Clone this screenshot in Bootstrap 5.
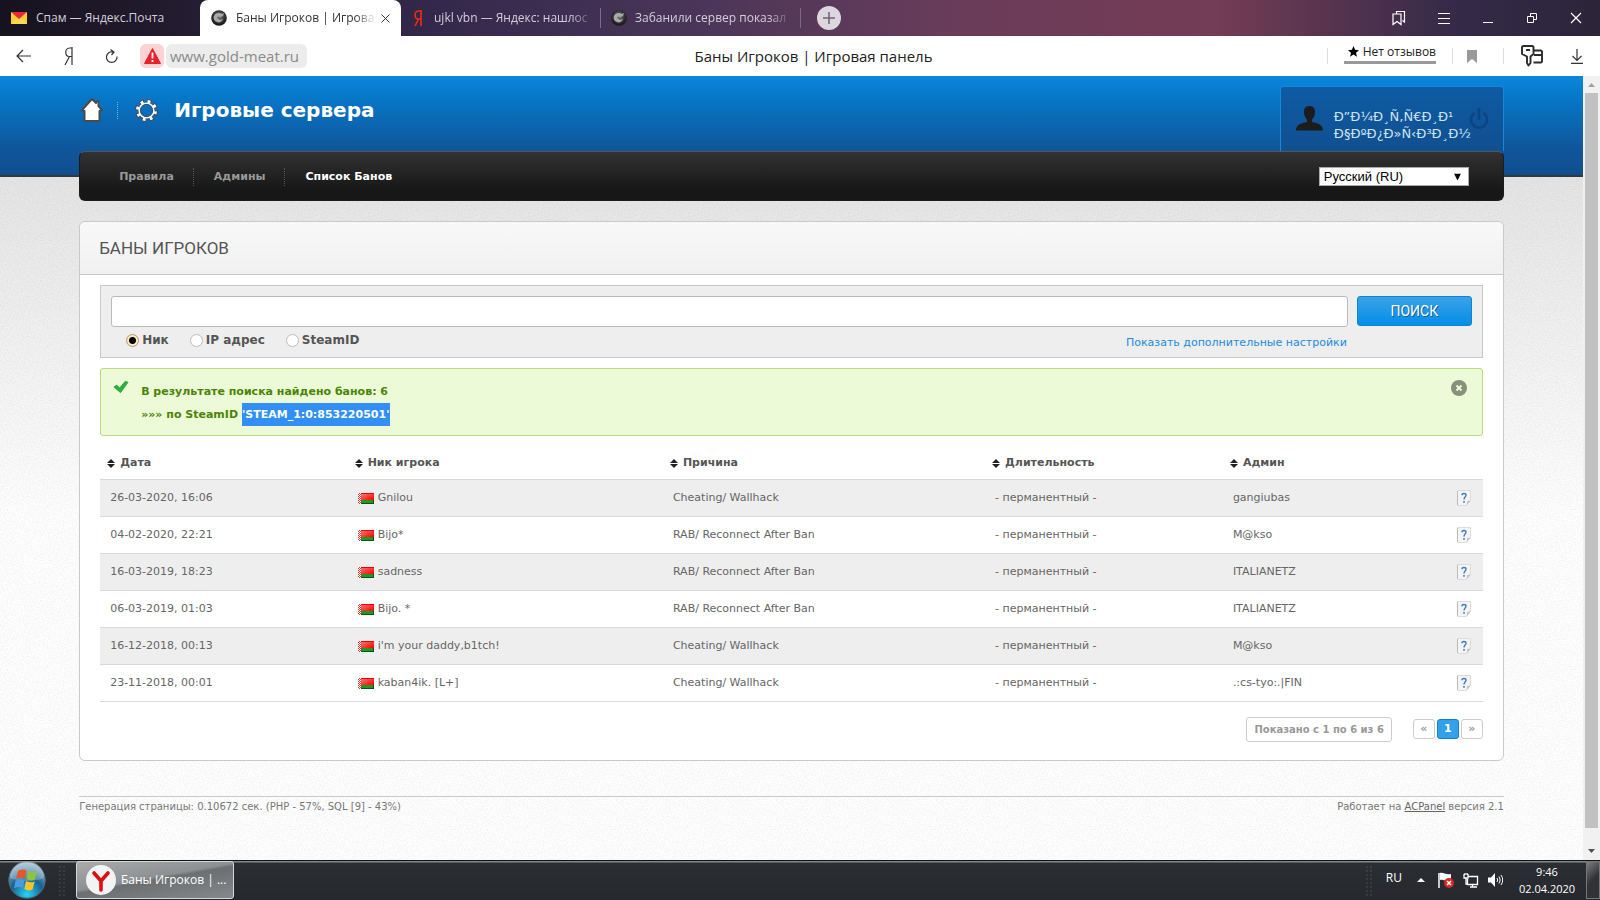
<!DOCTYPE html>
<html lang="ru">
<head>
<meta charset="utf-8">
<meta name="viewport" content="width=device-width, initial-scale=1">
<title>Баны Игроков | Игровая панель</title>
<link href="https://cdn.jsdelivr.net/npm/bootstrap@5.3.0/dist/css/bootstrap.min.css" rel="stylesheet">
<style>
:root{--ui:"Open Sans","Noto Sans",sans-serif;--site:"DejaVu Sans",Verdana,sans-serif}
body{font-family:var(--ui);font-size:13px;line-height:18px;background:#fff}
svg{display:block;flex:none}
button{font-family:inherit}
.plain{background:none;border:0;padding:0;color:inherit}

/* browser tabs */
.tabstrip{height:36px;background:linear-gradient(90deg,#16121f 0,#241c30 12%,#33284b 27%,#4b3659 44%,#6a3c5a 60%,#743c55 76%,#4a304c 86%,#342a49 91%,#2b2539 100%);color:#d3ced8}
.btab{height:36px;color:inherit;text-decoration:none;white-space:nowrap}
.btab .cap{flex:1;min-width:0;overflow:hidden;font-size:12px;-webkit-mask-image:linear-gradient(90deg,#000 85%,transparent)}
.btab .cap.full{-webkit-mask-image:none}
.btab.current{background:#fff;color:#333;border-radius:8px 8px 0 0}
.t-a{width:200px;padding-left:11px;gap:9px}
.t-b{width:201px;padding:0 11px 0 11px;gap:5px}
.t-c{width:199px;padding:0 6px 0 13px;gap:12px}
.t-d{width:199px;padding:0 8px 0 10px;gap:8px}
.tsep{width:1px;height:20px;background:#7a6b87}
.plus{width:24px;height:24px;border-radius:50%;background:#dcd6df;margin-left:16px}
.winbtns{gap:32px;padding-right:18px}

/* address bar */
.addressbar{height:40px;background:#fff;color:#222}
.leftset{flex:1 1 0;padding-left:16px}
.leftset .yandex,.leftset .reload{margin-left:32px}
.rightset{flex:1 1 0;padding-right:17px}
.warnbox{width:24px;height:24px;border-radius:6px;background:#fbd3d5;margin-left:21px}
.host{height:24px;line-height:24px;border:0;border-radius:6px;background:#ececec;color:#8a8a8a;font-size:15px;width:141px;padding:0 4px;margin-left:2px}
.pagename{font-size:15px;color:#222;padding-left:28px}
.reviews{font-size:12px;line-height:16px;border-bottom:3px solid #999;color:#222;text-decoration:none;margin:0 16px 5px;padding-bottom:1px}
.asep{width:1px;height:16px;background:#ddd}
.bookmark{margin:0 26px 0 14px}
.keys{margin:0 28px 0 17px}

/* web page */
.viewport{flex:1 1 auto;min-height:0}
.site{flex:1;min-width:0;font-family:var(--site);font-size:11px;line-height:16px;color:#666;
 background:url("data:image/svg+xml,%3Csvg xmlns='http://www.w3.org/2000/svg' width='160' height='160'%3E%3Cfilter id='n'%3E%3CfeTurbulence type='fractalNoise' baseFrequency='.7' numOctaves='2' stitchTiles='stitch'/%3E%3CfeColorMatrix values='0 0 0 0 0 0 0 0 0 0 0 0 0 0 0 .3 0 0 0 -.11'/%3E%3C/filter%3E%3Crect width='160' height='160' filter='url(%23n)' opacity='.35'/%3E%3C/svg%3E"),linear-gradient(#e5e5e5 100px,#fff 440px)}
.wrap{width:90%;margin:0 auto}
.bluehead{height:101px;background:linear-gradient(#0a87db,#0775c5 25%,#10559a 75%,#104f8e);border-bottom:2px solid #33383d}
.toprow{margin:21px 0 0 2px;height:26px}
.toprow .dots{height:17px;margin:0 17px 0 14px}
.brand{color:#fff;font-weight:700;font-size:20px;line-height:26px;margin-left:16px}
.dots{width:0;border-left:1px dotted #7fb6e4}
.userbox{width:224px;height:65px;margin-top:10px;border:1px solid #1688dd;border-bottom:0;border-radius:4px 4px 0 0;background:linear-gradient(#0e5ba4,#10508f);color:#cfe3f5;font-size:13px;line-height:17px}
.userbox .who{margin:19px 11px 0 15px}
.userbox .uname{padding-top:21px}
.userbox .off{margin:20px 0 0 188px}
.mainmenu{height:50px;margin-top:-26px;position:relative;border-radius:6px;background:linear-gradient(#323232,#171717 80%);border:1px solid #1c1c1c;border-top-color:#555;padding:1px 34px 0 19px}
.mainmenu a{color:#999;font-weight:700;text-decoration:none;padding:0 19px 0 20px}
.mainmenu a.on{color:#fff}
.mainmenu .dots{height:18px;border-color:#555}
.lang{width:150px;height:19px;border:1px solid #aaa;background:#fff;color:#000;font:13px/17px "Liberation Sans",sans-serif;padding:0 4px;appearance:none;display:block}
.lang-arrow{pointer-events:none}
.panelbox{margin-top:20px;border:1px solid #c9c9c9;border-radius:6px;background:#fff}
.panelhead{height:53px;border-bottom:1px solid #c9c9c9;border-radius:6px 6px 0 0;background:linear-gradient(#f8f8f8,#f1f1f1);padding:0 19px}
.panelhead h1{font:400 17px/24px Roboto,sans-serif;color:#555;margin:0}
.panelbody{padding:10px 20px 18px}
.searchbox{background:#eee;border:1px solid #c9c9c9;padding:10px;height:73px}
.q{height:31px;border:1px solid #bbb;border-radius:3px;background:#fff;padding:0 8px;min-width:0}
.go{width:115px;height:30px;margin-left:9px;border:1px solid #0a84d8;border-radius:3px;background:linear-gradient(#3ba2e6,#038ee9);color:#fff;font:400 14px/18px Roboto,sans-serif;text-shadow:1px 1px 0 #1a5c90}
.under{padding:5px 125px 0 0}
.kinds{gap:21px;font-size:12px;font-weight:700;color:#555;padding-left:15px}
.kinds label{gap:3px}
.kinds input{appearance:none;width:13px;height:13px;border:1px solid #bbb;border-radius:50%;background:#fff;margin:0}
.kinds input:checked{border-color:#b39a6b;background:radial-gradient(circle,#000 0 3px,#fbe9c4 4px)}
.more{color:#1a8be0;text-decoration:none;padding-top:3px}
.note{height:68px;margin-top:10px;border:1px solid #b9dc80;border-radius:3px;background:#ecfad8;color:#4b8505;font-weight:700;line-height:23px;padding:11px 15px 0 12px;gap:12px}
.note mark{background:#318ff5;color:#fff;padding:0;display:inline-block}
.bans{width:100%;table-layout:fixed;margin:7px 0 0;color:#666;font-size:11px;line-height:16px}
.bans th,.bans td{height:37px;padding:1px 10px 0;border-bottom:1px solid #d9d9d9;vertical-align:middle;white-space:nowrap}
.bans th{height:36px;padding:5px 7px 0;color:#555}
.bans th span{gap:5px}
.bans tbody tr:nth-child(odd){background:#eee}
.w-date{width:17.9%}.w-nick{width:22.8%}.w-why{width:23.3%}.w-len{width:17.2%}.w-info{width:36px}
.pager{gap:2px;font-weight:700;color:#999;margin-top:15px}
.pager .box{border:1px solid #ccc;border-radius:3px;height:20px;line-height:18px;min-width:22px;text-align:center;background:#fff;color:#999;font-size:11px;text-decoration:none}
.pager .box.sum{height:25px;line-height:23px;font-size:10px;padding:0 7px;margin-right:19px}
.pager .box.cur{background:#36a0e6;border-color:#0a84d8;color:#fff}
.foot{margin-top:35px;border-top:1px solid #c9c9c9;font-size:10px;padding-top:2px;color:#777}
.foot a{color:#666}
.sbar{width:17px;background:#f1f1f1}
.sbar .thumb{width:13px;flex:1}
.sbar .thumb::before{content:"";display:block;height:98%;background:#c1c1c1}

/* taskbar */
.taskbar{height:40px;background:linear-gradient(#111 1px,#85888b 1px,#85888b 2px,#2b2e33 3px,#26282d);color:#fff;font-size:12px}
.start{margin-left:8px}
.grip{width:9px;height:31px;background:radial-gradient(circle,#666 0,transparent 1px) 0 0/4px 4px}
.start + .grip{margin:0 9px 0 12px}
.taskbtn{width:158px;height:38px;border:1px solid #d5d7d9;border-radius:3px;background:linear-gradient(170deg,#a9abac 0,#8d9092 45%,#6c6f71 50%,#86898b 100%);color:#fff;font-size:12px;padding:0 9px;gap:5px;white-space:nowrap}
.inputlang{padding-bottom:5px;margin:0 15px 0 12px}
.tray{gap:9px;margin-left:13px}
.clock{font-size:11px;line-height:17px;width:62px;margin:0 8px 0 13px}
.showdesk{width:14px;height:38px;border:1px solid #777;background:linear-gradient(135deg,#7d7f81,#303235 50%)}
</style>
</head>
<body class="vh-100 d-flex flex-column overflow-hidden">

<svg width="0" height="0" class="position-absolute" aria-hidden="true">
 <defs>
  <linearGradient id="redg" x1="0" y1="0" x2="1" y2="1"><stop offset="0" stop-color="#ff7a7a"/><stop offset="1" stop-color="#f00"/></linearGradient>
  <radialGradient id="orb" cx=".5" cy=".9" r=".9"><stop offset="0" stop-color="#25d5f8"/><stop offset=".5" stop-color="#17618f"/><stop offset="1" stop-color="#a8c3d4"/></radialGradient>
  <radialGradient id="ball" cx=".5" cy=".4" r=".6"><stop offset="0" stop-color="#888"/><stop offset=".6" stop-color="#333"/><stop offset="1" stop-color="#111"/></radialGradient>
  <symbol id="sort" viewBox="0 0 8 9"><path d="M4 0l4 4H0zM0 5h8L4 9z" fill="#222"/></symbol>
  <symbol id="by" viewBox="0 0 16 11"><path d="M0 0h16v11H0z" fill="#fff"/><path d="M3 0h13v7H3z" fill="url(#redg)"/><path d="M3 0h13v1H3z" fill="#e00"/><path d="M3 7h13v4H3z" fill="#1f9a1f"/><path d="M3 10h12V7h1v4H3z" fill="#052"/><path d="M1.500 0v11" stroke="#e33" stroke-dasharray="1 1"/><path d="M.5 1v10M2.500 1v10" stroke="#e33" stroke-dasharray="1 1"/></symbol>
  <symbol id="info" viewBox="0 0 14 16"><path d="M.5.5h13v10l-4 5h-9z" fill="#f4f4f4" stroke="#dcdcdc"/><path d="M.5 1v14" stroke="#bbb"/><path d="M9.500 15l1-4 3-.5z" fill="#bbb"/><path d="M5 5.200C5 3 9 3 9 5.200 9 7 7 7 7 9.500" fill="none" stroke="#3c7fc8" stroke-width="1.400"/><path d="M6.200 11h1.600v1.800H6.200z" fill="#3c7fc8"/></symbol>
  <symbol id="cs" viewBox="0 0 16 16"><circle cx="8" cy="8" r="7.800" fill="url(#ball)"/><path d="M3 6c1-3 5-4 8-2l2-1-1 3-3 1-2-1-1 2 3 2 3-1c-1 3-4 4-6 3-3-1-4-4-3-6z" fill="#aaa"/></symbol>
 </defs>
</svg>

<header>
 <nav class="tabstrip d-flex align-items-center" aria-label="Вкладки">
  <a href="#" class="btab t-a d-flex align-items-center"><svg width="16" height="12" viewBox="0 0 16 12"><path d="M0 0h16v12H0z" fill="#fc3"/><path d="M0 0h16L8 7z" fill="#e8283a"/><path d="M0 12l6-6 2 2 2-2 6 6z" fill="#ffd94d"/></svg><span class="cap full">Спам — Яндекс.Почта</span></a>
  <a href="#" class="btab current t-b d-flex align-items-center"><svg class="me-1" width="16" height="16"><use href="#cs"/></svg><span class="cap">Баны Игроков | Игрова</span><svg width="9" height="9" viewBox="0 0 9 9"><path d="M.5.5l8 8m0-8l-8 8" stroke="#333"/></svg></a>
  <a href="#" class="btab t-c d-flex align-items-center"><svg width="8" height="16" viewBox="0 0 8 16"><path d="M7 0v16M7 1H4.500C0 1 0 9 4.500 9H7M4.500 9L1 16" fill="none" stroke="#f22b12" stroke-width="1.600"/></svg><span class="cap">ujkl vbn — Яндекс: нашлос</span></a>
  <span class="tsep"></span>
  <a href="#" class="btab t-d d-flex align-items-center"><svg width="16" height="16"><use href="#cs"/></svg><span class="cap">Забанили сервер показал</span></a>
  <span class="tsep"></span>
  <button class="plus border-0 p-0 d-flex align-items-center justify-content-center" aria-label="Новая вкладка"><svg width="12" height="12" viewBox="0 0 12 12"><path d="M6 0v12M0 6h12" stroke="#6b6472" stroke-width="1.500"/></svg></button>
  <div class="winbtns d-flex align-items-center ms-auto">
   <button class="plain" aria-label="Коллекции"><svg width="14" height="16" viewBox="0 0 14 16"><path d="M1 4h8v10.500l-4-3-4 3zM4.500 4V1.500h8V12l-2-1.500" fill="none" stroke="#fff" stroke-width="1.200"/></svg></button>
   <button class="plain" aria-label="Меню"><svg width="12" height="11" viewBox="0 0 12 11"><path d="M0 .5h12M0 5.500h12M0 10.500h12" stroke="#fff"/></svg></button>
   <button class="plain pt-2" aria-label="Свернуть"><svg width="12" height="3" viewBox="0 0 12 3"><path d="M1 1.500h10" stroke="#fff"/></svg></button>
   <button class="plain" aria-label="Развернуть"><svg width="12" height="12" viewBox="0 0 12 12"><path d="M1.500 4.500h6v6h-6zM4.500 4V1.500h6v6H8" fill="none" stroke="#fff"/></svg></button>
   <button class="plain" aria-label="Закрыть"><svg width="12" height="12" viewBox="0 0 12 12"><path d="M1 1l10 10M11 1L1 11" stroke="#fff" stroke-width="1.200"/></svg></button>
  </div>
 </nav>
 <div class="addressbar d-flex align-items-center">
  <div class="leftset d-flex align-items-center">
   <button class="plain" aria-label="Назад"><svg width="16" height="14" viewBox="0 0 16 14"><path d="M15 7H1m6-6L1 7l6 6" fill="none" stroke="#333" stroke-width="1.200"/></svg></button>
   <button class="plain yandex" aria-label="Яндекс"><svg width="9" height="18" viewBox="0 0 9 18"><path d="M8 0v18M8 1H5.500C.5 1 .5 9.500 5.500 9.500H8M5.500 9.500L1 18" fill="none" stroke="#333" stroke-width="1.200"/></svg></button>
   <button class="plain reload" aria-label="Обновить"><svg width="14" height="15" viewBox="0 0 14 15"><path d="M12 7.500a5.300 5.300 0 1 1-4-4.600H6M5.500.5L9 3 6.500 6" fill="none" stroke="#333" stroke-width="1.200"/></svg></button>
   <span class="warnbox d-flex align-items-center justify-content-center"><svg width="17" height="16" viewBox="0 0 17 16"><path d="M8.500.5l8 15H.5z" fill="#e3242b" stroke="#e3242b" stroke-linejoin="round"/><path d="M8.500 4.500v6M8.500 12v2" stroke="#fff" stroke-width="1.800"/></svg></span>
   <input class="host" aria-label="Адрес" value="www.gold-meat.ru">
  </div>
  <div class="pagename">Баны Игроков | Игровая панель</div>
  <div class="rightset d-flex align-items-center justify-content-end">
   <span class="asep"></span>
   <a href="#" class="reviews d-flex align-items-center"><svg class="ms-1 me-1" width="11" height="11" viewBox="0 0 24 24"><path d="M12 0l3.500 8.300 8.500.7-6.500 5.700 2 8.800L12 18.800l-7.500 4.700 2-8.800L0 9l8.500-.7z"/></svg>Нет отзывов</a>
   <span class="asep"></span>
   <button class="plain bookmark" aria-label="Закладка"><svg width="10" height="13" viewBox="0 0 10 13"><path d="M0 0h10v13L5 9l-5 4z" fill="#999"/></svg></button>
   <span class="asep"></span>
   <button class="plain keys" aria-label="Пароли"><svg width="22" height="22" viewBox="0 0 22 22"><path d="M2 1h9.500l1 1v7l-3 2.500V18l-2 2.500L6 18v-6.500L1 9V2zM5 5h4M13 5.500h7l1 1v10l-1 1h-7.500M13 10h8" fill="none" stroke="#2b2b2b" stroke-width="1.900" stroke-linejoin="round"/></svg></button>
   <button class="plain" aria-label="Загрузки"><svg width="12" height="16" viewBox="0 0 12 16"><path d="M6 1v11M1.500 8L6 12.500 10.500 8M0 15.300h12" fill="none" stroke="#333" stroke-width="1.200"/></svg></button>
  </div>
 </div>
</header>

<div class="viewport d-flex">
 <main class="site">
  <div class="bluehead">
   <div class="wrap d-flex">
    <div class="toprow d-flex align-items-center">
     <a href="#" aria-label="Главная"><svg width="22" height="24" viewBox="0 0 22 24"><path d="M11 1l4 4V3.500h2.500V8L21 12l-2.500 1v10h-15V13L1 12z" fill="#fff" stroke="#4a4a4a" stroke-width="2" stroke-linejoin="round"/></svg></a>
     <span class="dots"></span>
     <svg width="23" height="23" viewBox="0 0 24 24"><circle cx="12" cy="12" r="9.500" fill="none" stroke="#4a4a4a" stroke-width="5" stroke-dasharray="4.700 2.760"/><circle cx="12" cy="12" r="9.500" fill="none" stroke="#fff" stroke-width="3" stroke-dasharray="2.900 4.560" stroke-dashoffset="-.9"/><circle cx="12" cy="12" r="7.600" fill="none" stroke="#fff" stroke-width="1.600"/><circle cx="12" cy="12" r="6.300" fill="none" stroke="#4a4a4a"/></svg>
     <div class="brand">Игровые сервера</div>
    </div>
    <div class="userbox ms-auto d-flex">
     <svg class="who" width="27" height="25" viewBox="0 0 27 25"><path d="M13.500 0C9 0 7.500 3.500 8 7c.3 3 1.500 5 3 6.500V16c-6 1-11 3-11 8.500h27c0-5.500-5-7.500-11-8.500v-2.500c1.500-1.500 2.700-3.500 3-6.500.5-3.500-1-7-5.500-7z" fill="#1c1c1c"/></svg>
     <div class="uname">Ð”Ð¼Ð¸Ñ‚Ñ€Ð¸Ð¹<br>Ð§ÐºÐ¿Ð»Ñ‹Ð³Ð¸Ð½</div>
     <a href="#" class="off position-absolute" aria-label="Выход"><svg width="20" height="23" viewBox="0 0 20 23"><path d="M5.500 6a8 8 0 1 0 9 0M10 1v12" fill="none" stroke="#0b4683" stroke-width="2.600"/></svg></a>
    </div>
   </div>
  </div>
  <div class="wrap">
   <nav class="mainmenu d-flex align-items-center">
    <a href="#">Правила</a><span class="dots"></span><a href="#">Админы</a><span class="dots"></span><a href="#" class="on">Список Банов</a>
    <div class="ms-auto position-relative"><select class="lang" aria-label="Язык"><option>Русский (RU)</option></select><svg class="lang-arrow position-absolute top-50 end-0 translate-middle-y me-2" width="7" height="7" viewBox="0 0 7 7"><path d="M0 0h7L3.500 7z"/></svg></div>
   </nav>

   <section class="panelbox">
    <div class="panelhead d-flex align-items-center"><h1>БАНЫ ИГРОКОВ</h1></div>
    <div class="panelbody">
     <form class="searchbox">
      <div class="d-flex"><input class="q flex-grow-1" aria-label="Поиск" type="text"><button type="button" class="go">ПОИСК</button></div>
      <div class="under d-flex align-items-start">
       <div class="kinds d-flex">
        <label class="d-flex align-items-center"><input type="radio" name="k" checked>Ник</label>
        <label class="d-flex align-items-center"><input type="radio" name="k">IP адрес</label>
        <label class="d-flex align-items-center"><input type="radio" name="k">SteamID</label>
       </div>
       <a href="#" class="more ms-auto">Показать дополнительные настройки</a>
      </div>
     </form>
     <div class="note d-flex">
      <svg width="16" height="14" viewBox="0 0 17 14"><path d="M1 7l3-2 3 3 6-7 3 1-8 11z" fill="#2cb53c" stroke="#1f9a30" stroke-width=".8"/></svg>
      <div>В результате поиска найдено банов: 6<br>»»» по SteamID <mark>'STEAM_1:0:853220501'</mark></div>
      <button class="plain ms-auto align-self-start" aria-label="Скрыть"><svg width="16" height="16" viewBox="0 0 16 16"><circle cx="8" cy="8" r="8" fill="#86907a"/><path d="M5.500 5.500l5 5m0-5l-5 5" stroke="#ecfad8" stroke-width="2"/></svg></button>
     </div>
     <table class="bans">
      <colgroup><col class="w-date"><col class="w-nick"><col class="w-why"><col class="w-len"><col><col class="w-info"></colgroup>
      <thead><tr id="hd"></tr></thead>
      <tbody id="rows"></tbody>
     </table>
     <div class="pager d-flex align-items-center justify-content-end">
      <span class="box sum">Показано с 1 по 6 из 6</span><a href="#" class="box">«</a><a href="#" class="box cur">1</a><a href="#" class="box">»</a>
     </div>
    </div>
   </section>

   <footer class="foot d-flex justify-content-between"><span>Генерация страницы: 0.10672 сек. (PHP - 57%, SQL [9] - 43%)</span><span>Работает на <a href="#">ACPanel</a> версия 2.1</span></footer>
  </div>
 </main>
 <div class="sbar d-flex flex-column align-items-center">
  <svg width="17" height="17" viewBox="0 0 17 17"><path d="M5 11h7L8.500 7z" fill="#a3a3a3"/></svg>
  <div class="thumb"></div>
  <svg width="17" height="17" viewBox="0 0 17 17"><path d="M5 6h7l-3.500 4z" fill="#505050"/></svg>
 </div>
</div>

<footer class="taskbar d-flex align-items-center">
 <button class="plain start" aria-label="Пуск"><svg width="38" height="38" viewBox="0 0 38 38"><circle cx="19" cy="19" r="18.200" fill="url(#orb)" stroke="#4d6c80"/><path d="M2 17a17 17 0 0 1 34 0c-10 4-24 4-34 0z" fill="#fff" opacity=".25"/><path d="M10 10c3-2 6-2 8.500-.5L17 17.500c-3-1.500-6-1.300-9 .3z" fill="#e8562a"/><path d="M20 10c3 1.500 6 1.500 9 0l-2 8.500c-3 1.500-6 1-8.500-.5z" fill="#8cc63f"/><path d="M7.500 19.500c3-1.600 6-1.500 9 0L15 27c-3-1.500-6-1.300-9 .3z" fill="#4b9be0"/><path d="M18 20c3 1.500 6 1.700 8.700.4L24.500 28.500c-3 1.500-5.500 1-8.200-.5z" fill="#fbc22b"/></svg></button>
 <span class="grip"></span>
 <button class="taskbtn d-flex align-items-center"><svg width="30" height="30" viewBox="0 0 30 30"><circle cx="15" cy="15" r="15" fill="#f3f3f3"/><path d="M8 8l7 8 7-8M15 16v9" fill="none" stroke="#d8100f" stroke-width="3.600" stroke-linecap="round"/></svg><span>Баны Игроков | ...</span></button>
 <span class="grip ms-auto"></span>
 <span class="inputlang">RU</span>
 <svg width="8" height="4" viewBox="0 0 8 4"><path d="M0 4h8L4 0z" fill="#fff"/></svg>
 <div class="tray d-flex align-items-center">
  <svg width="16" height="16" viewBox="0 0 16 16"><path d="M1 1v15" stroke="#fff" stroke-width="1.500"/><path d="M2 1c4-1 5 2 11 1v7c-5 1-7-2-11-1z" fill="#fff"/><circle cx="11" cy="11" r="5" fill="#d8281f"/><path d="M9 9l4 4m0-4l-4 4" stroke="#fff" stroke-width="1.500"/></svg>
  <svg width="16" height="15" viewBox="0 0 16 15"><path d="M5 3.500h9.500v8H4.500V6M7 14h7M9.500 12v2M1 1v4h4V1M3 5v6h2M2 0v2M4 0v2" fill="none" stroke="#fff" stroke-width="1.300"/></svg>
  <svg width="15" height="14" viewBox="0 0 15 14"><path d="M0 4.500h3L7 0v14L3 9.500H0z" fill="#fff"/><path d="M9 5q1.500 2 0 4M11 3.500q2.500 3.500 0 7M13 2q3.500 5 0 10" fill="none" stroke="#fff"/></svg>
 </div>
 <div class="clock text-center">9:46<br>02.04.2020</div>
 <span class="showdesk"></span>
</footer>

<script src="https://cdn.jsdelivr.net/npm/bootstrap@5.3.0/dist/js/bootstrap.bundle.min.js"></script>
<script>
const heads = ["Дата","Ник игрока","Причина","Длительность","Админ"];
const bans = [
 ["26-03-2020, 16:06","Gnilou","Cheating/ Wallhack","gangiubas"],
 ["04-02-2020, 22:21","Bijo*","RAB/ Reconnect After Ban","M@kso"],
 ["16-03-2019, 18:23","sadness","RAB/ Reconnect After Ban","ITALIANETZ"],
 ["06-03-2019, 01:03","Bijo. *","RAB/ Reconnect After Ban","ITALIANETZ"],
 ["16-12-2018, 00:13","i'm your daddy,b1tch!","Cheating/ Wallhack","M@kso"],
 ["23-11-2018, 00:01","kaban4ik. [L+]","Cheating/ Wallhack",".:cs-tyo:.|FIN"]
];
document.getElementById("hd").innerHTML = heads.map(h =>
 `<th scope="col"><span class="d-flex align-items-center"><svg width="8" height="9"><use href="#sort"/></svg>${h}</span></th>`).join("") + "<th></th>";
document.getElementById("rows").innerHTML = bans.map(b =>
 `<tr><td>${b[0]}</td><td><span class="d-flex align-items-center"><svg class="me-1" width="16" height="11"><use href="#by"/></svg>${b[1]}</span></td><td>${b[2]}</td><td>- перманентный -</td><td>${b[3]}</td><td><a href="#" aria-label="Подробнее"><svg width="14" height="16"><use href="#info"/></svg></a></td></tr>`).join("");
</script>
</body>
</html>
